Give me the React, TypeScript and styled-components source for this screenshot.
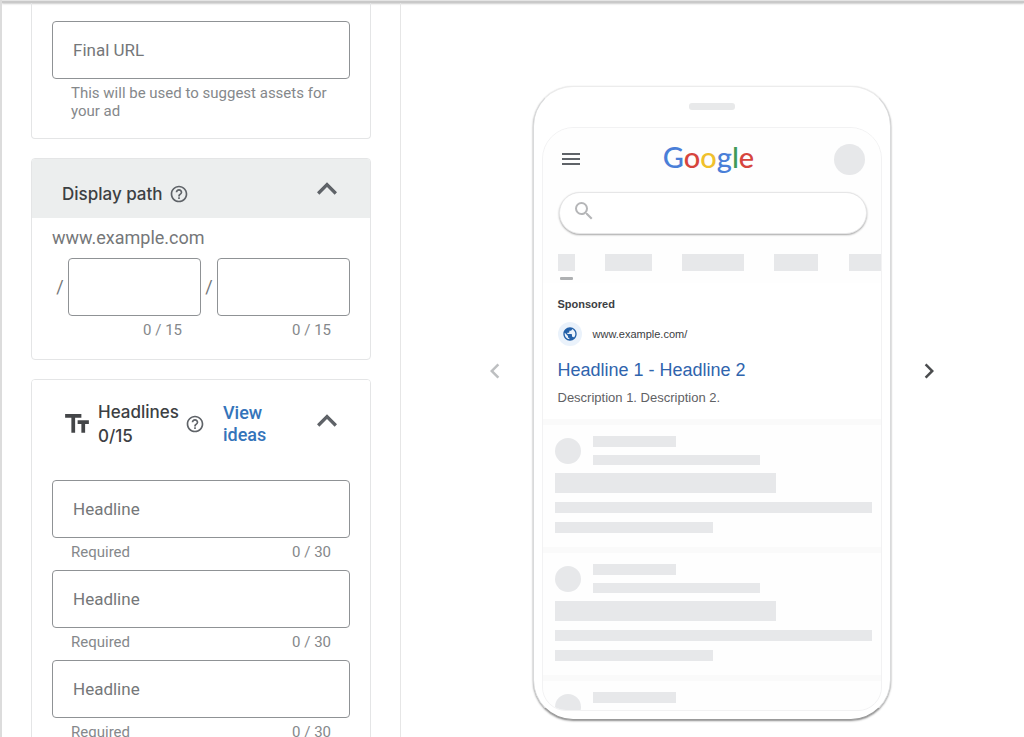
import React from "react";
import styled, { createGlobalStyle } from "styled-components";
import {
  MdChevronLeft,
  MdChevronRight,
  MdExpandLess,
  MdHelpOutline,
  MdMenu,
  MdPublic,
  MdSearch,
  MdTextFields,
} from "react-icons/md";

const GlobalStyle = createGlobalStyle`
  * { box-sizing: border-box; }
  body {
    margin: 0;
    background: #fff;
    color: #3c4043;
    font-family: Roboto, "Liberation Sans", sans-serif;
  }
  button, input { font: inherit; }
`;

const Page = styled.div`
  display: flex;
  flex-direction: column;
  height: 100vh;
  overflow: hidden;
  border-left: 2px solid #dcdcdc;
`;

const TopEdge = styled.div`
  flex: none;
  height: 3px;
  background: #c9c9c9;
  border-top: 1px solid #e4e4e4;
  box-shadow: 0 1px 2px rgba(0, 0, 0, 0.2);
`;

const Columns = styled.main`
  display: flex;
  flex: 1;
  min-height: 0;
`;

const Editor = styled.form`
  flex: 0 0 399px;
  display: flex;
  flex-direction: column;
  gap: 19px;
  padding: 0 29px;
  border-right: 1px solid #e6e6e6;
  overflow: hidden;
`;

const Card = styled.section<{ $open?: boolean }>`
  flex: none;
  border: 1px solid #e4e5e6;
  border-top-width: ${(p) => (p.$open ? "0" : "1px")};
  border-radius: ${(p) => (p.$open ? "0 0 4px 4px" : "4px")};
  overflow: hidden;
`;

const CardHeader = styled.header<{ $shaded?: boolean }>`
  display: flex;
  align-items: center;
  justify-content: space-between;
  height: ${(p) => (p.$shaded ? "59px" : "82px")};
  padding: 0 23px 0 30px;
  background: ${(p) => (p.$shaded ? "#eceeee" : "#fff")};
`;

const CardBody = styled.div<{ $top: number; $bottom: number }>`
  padding: ${(p) => p.$top}px 20px ${(p) => p.$bottom}px;
`;

const TitleGroup = styled.div<{ $low?: boolean }>`
  display: flex;
  align-items: center;
  gap: 6px;
  padding-top: ${(p) => (p.$low ? "10px" : "6px")};
`;

const Title = styled.h2`
  margin: 0;
  font: 500 17px/24px Inter, Roboto, sans-serif;
  color: #3c4043;
`;

const IconButton = styled.button<{ $size: number; $color?: string }>`
  display: flex;
  align-items: center;
  justify-content: center;
  flex: none;
  width: ${(p) => p.$size}px;
  height: ${(p) => p.$size}px;
  padding: 0;
  border: 0;
  background: none;
  color: ${(p) => p.$color || "#5f6368"};
  cursor: pointer;
`;

const ViewIdeas = styled.a`
  width: 66px;
  padding-top: 6px;
  font-weight: 500;
  font-size: 18px;
  line-height: 22px;
  color: #3474ba;
  text-decoration: none;
`;

const TextBox = styled.input`
  display: block;
  width: 100%;
  min-width: 0;
  height: 58px;
  padding: 0 20px;
  border: 1px solid #8f9295;
  border-radius: 4px;
  background: #fff;
  font-size: 17px;
  color: #3c4043;
  &::placeholder { color: #757779; opacity: 1; }
`;

const Hint = styled.div`
  display: flex;
  justify-content: space-between;
  padding: 5px 19px 0;
  font-size: 15px;
  line-height: 18px;
  color: #85888b;
`;

const HintText = styled.p`
  margin: 0;
`;

const Count = styled.span`
  margin-left: auto;
`;

const FieldStack = styled.div`
  display: flex;
  flex-direction: column;
  gap: 9px;
`;

const Domain = styled.p`
  margin: 0 0 8px;
  font-size: 18px;
  line-height: 24px;
  color: #757779;
`;

const PathRow = styled.div`
  display: flex;
`;

const Slash = styled.span`
  flex: none;
  width: 16px;
  text-align: center;
  font-size: 18px;
  line-height: 58px;
  color: #757779;
`;

const PathField = styled.div`
  flex: 1;
  min-width: 0;
`;

const Preview = styled.section`
  flex: 1;
  display: flex;
  align-items: center;
  justify-content: center;
  gap: 23px;
  padding: 2px 2px 0 0;
`;

const Phone = styled.div`
  flex: 0 0 358px;
  align-self: flex-start;
  margin-top: 81px;
  padding: 0 8px 8px;
  border: 1px solid #d9dadb;
  border-top-color: #ececec;
  border-bottom-color: #9a9a9a;
  border-radius: 40px;
  background: #fff;
  box-shadow: 0 1px 2px rgba(0, 0, 0, 0.45);
`;

const Speaker = styled.div`
  width: 46px;
  height: 7px;
  margin: 16px auto 17px;
  border-radius: 3px;
  background: #e8e9ea;
`;

const Screen = styled.div`
  height: 584px;
  border: 1px solid #f2f2f3;
  border-radius: 32px 32px 24px 24px;
  background: #fafafa;
  overflow: hidden;
`;

const SearchHead = styled.div`
  padding: 15px 0 3px;
  background: #fefefe;
`;

const Bar = styled.div`
  display: flex;
  align-items: center;
  justify-content: space-between;
  padding: 0 15px 0 16px;
`;

const Wordmark = styled.div`
  padding-bottom: 4px;
  font: 500 29px/28px Lato, sans-serif;
`;

const Letter = styled.span<{ $color: string }>`
  color: ${(p) => p.$color};
`;

const Disc = styled.div<{ $size: number }>`
  flex: none;
  width: ${(p) => p.$size}px;
  height: ${(p) => p.$size}px;
  border-radius: 50%;
  background: #e7e8ea;
`;

const SearchField = styled.label`
  display: flex;
  align-items: center;
  height: 42px;
  margin: 17px 14px 20px 16px;
  padding: 0 14px 4px 12px;
  border: 1px solid #e6e6e7;
  border-radius: 21px;
  background: #fff;
  color: #b5b6b8;
  box-shadow: 0 1px 2px rgba(0, 0, 0, 0.35);
`;

const SearchInput = styled.input`
  flex: 1;
  min-width: 0;
  border: 0;
  outline: 0;
  background: none;
`;

const Tabs = styled.div`
  display: flex;
  justify-content: space-between;
  padding-left: 15px;
`;

const Tab = styled.div<{ $width: number }>`
  width: ${(p) => p.$width}px;
  height: 17px;
  background: #e7e8ea;
`;

const Underline = styled.div`
  width: 13px;
  height: 3px;
  margin: 6px 0 0 17px;
  border-radius: 1px;
  background: #aeb0b2;
`;

const Results = styled.div`
  display: flex;
  flex-direction: column;
  gap: 6px;
`;

const Ad = styled.article`
  height: 136px;
  padding: 14px 15px 0;
  background: #fff;
  font-family: "Liberation Sans", Arial, sans-serif;
`;

const Sponsored = styled.div`
  font-weight: 700;
  font-size: 11px;
  line-height: 14px;
`;

const SiteRow = styled.div`
  display: flex;
  align-items: center;
  gap: 11px;
  margin-top: 11px;
  font-size: 11px;
  line-height: 14px;
`;

const Favicon = styled.span`
  display: flex;
  align-items: center;
  justify-content: center;
  width: 24px;
  height: 24px;
  border-radius: 50%;
  background: #eaf2fb;
  color: #2360a8;
`;

const AdLink = styled.a`
  display: block;
  margin-top: 12px;
  font-size: 18px;
  line-height: 24px;
  color: #2f64ad;
  text-decoration: none;
`;

const Description = styled.p`
  margin: 8px 0 0;
  font-size: 13px;
  line-height: 16px;
  color: #5f6164;
`;

const Placeholder = styled.div`
  flex: none;
  height: 122px;
  padding: 11px 9px 0 12px;
  background: #fefefe;
`;

const Lead = styled.div`
  display: flex;
  align-items: center;
  gap: 12px;
`;

const Lines = styled.div`
  flex: 1;
`;

const Line = styled.div<{ $width: string; $height: number; $gap?: number }>`
  width: ${(p) => p.$width};
  height: ${(p) => p.$height}px;
  margin-top: ${(p) => p.$gap || 0}px;
  background: #e7e8ea;
`;

const wordmark: [string, string][] = [
  ["G", "#4a7fd8"],
  ["o", "#d6453d"],
  ["o", "#f0c02c"],
  ["g", "#4a7fd8"],
  ["l", "#3f9a57"],
  ["e", "#d6453d"],
];

function HeadlineField({ index }: { index: number }) {
  return (
    <div>
      <TextBox aria-label={`Headline ${index}`} placeholder="Headline" />
      <Hint>
        <HintText>Required</HintText>
        <Count>0 / 30</Count>
      </Hint>
    </div>
  );
}

function PathPart({ label }: { label: string }) {
  return (
    <>
      <Slash>/</Slash>
      <PathField>
        <TextBox aria-label={label} />
        <Hint>
          <Count>0 / 15</Count>
        </Hint>
      </PathField>
    </>
  );
}

function ResultPlaceholder() {
  return (
    <Placeholder>
      <Lead>
        <Disc $size={26} />
        <Lines>
          <Line $width="83px" $height={11} />
          <Line $width="167px" $height={10} $gap={8} />
        </Lines>
      </Lead>
      <Line $width="70%" $height={20} $gap={8} />
      <Line $width="100%" $height={11} $gap={9} />
      <Line $width="50%" $height={11} $gap={9} />
    </Placeholder>
  );
}

export default function App() {
  return (
    <>
      <GlobalStyle />
      <Page>
        <TopEdge />
        <Columns>
          <Editor>
            <Card $open>
              <CardBody $top={18} $bottom={18}>
                <TextBox aria-label="Final URL" placeholder="Final URL" />
                <Hint>
                  <HintText>This will be used to suggest assets for your ad</HintText>
                </Hint>
              </CardBody>
            </Card>

            <Card>
              <CardHeader $shaded>
                <TitleGroup $low>
                  <Title>Display path</Title>
                  <IconButton type="button" $size={20} aria-label="Help with display path">
                    <MdHelpOutline size={20} />
                  </IconButton>
                </TitleGroup>
                <IconButton type="button" $size={40} aria-label="Collapse display path">
                  <MdExpandLess size={40} />
                </IconButton>
              </CardHeader>
              <CardBody $top={8} $bottom={20}>
                <Domain>www.example.com</Domain>
                <PathRow>
                  <PathPart label="Path 1" />
                  <PathPart label="Path 2" />
                </PathRow>
              </CardBody>
            </Card>

            <Card>
              <CardHeader>
                <TitleGroup>
                  <MdTextFields size={30} color="#444648" />
                  <Title>
                    Headlines
                    <br />
                    0/15
                  </Title>
                  <IconButton type="button" $size={20} aria-label="Help with headlines">
                    <MdHelpOutline size={20} />
                  </IconButton>
                </TitleGroup>
                <ViewIdeas href="#ideas">View ideas</ViewIdeas>
                <IconButton type="button" $size={40} aria-label="Collapse headlines">
                  <MdExpandLess size={40} />
                </IconButton>
              </CardHeader>
              <CardBody $top={18} $bottom={18}>
                <FieldStack>
                  <HeadlineField index={1} />
                  <HeadlineField index={2} />
                  <HeadlineField index={3} />
                </FieldStack>
              </CardBody>
            </Card>
          </Editor>

          <Preview>
            <IconButton type="button" $size={30} $color="#bdbfc1" aria-label="Previous preview">
              <MdChevronLeft size={30} />
            </IconButton>
            <Phone>
              <Speaker />
              <Screen>
                <SearchHead>
                  <Bar>
                    <IconButton type="button" $size={24} aria-label="Menu">
                      <MdMenu size={24} />
                    </IconButton>
                    <Wordmark>
                      {wordmark.map(([letter, color], i) => (
                        <Letter key={i} $color={color}>
                          {letter}
                        </Letter>
                      ))}
                    </Wordmark>
                    <Disc $size={31} />
                  </Bar>
                  <SearchField>
                    <MdSearch size={24} />
                    <SearchInput type="text" aria-label="Search" />
                  </SearchField>
                  <Tabs>
                    <Tab $width={17} />
                    <Tab $width={47} />
                    <Tab $width={62} />
                    <Tab $width={44} />
                    <Tab $width={32} />
                  </Tabs>
                  <Underline />
                </SearchHead>
                <Results>
                  <Ad>
                    <Sponsored>Sponsored</Sponsored>
                    <SiteRow>
                      <Favicon>
                        <MdPublic size={16} />
                      </Favicon>
                      www.example.com/
                    </SiteRow>
                    <AdLink href="#ad">Headline 1 - Headline 2</AdLink>
                    <Description>Description 1. Description 2.</Description>
                  </Ad>
                  <ResultPlaceholder />
                  <ResultPlaceholder />
                  <ResultPlaceholder />
                </Results>
              </Screen>
            </Phone>
            <IconButton type="button" $size={30} $color="#4a4c4e" aria-label="Next preview">
              <MdChevronRight size={30} />
            </IconButton>
          </Preview>
        </Columns>
      </Page>
    </>
  );
}
